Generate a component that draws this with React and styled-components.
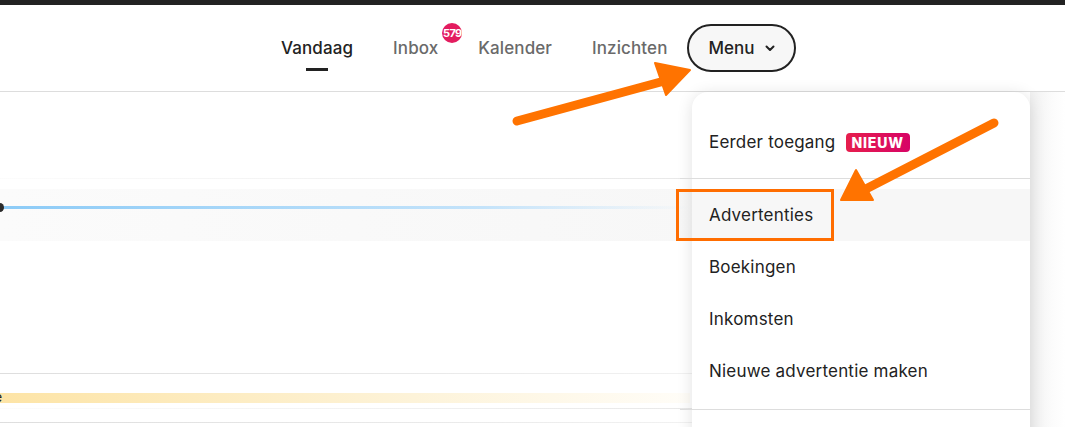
import styled, { createGlobalStyle } from "styled-components";

const GlobalStyle = createGlobalStyle`
  html, body {
    margin: 0;
    padding: 0;
    background: #fff;
    font-family: Inter, "Noto Sans", "Liberation Sans", sans-serif;
    color: #222;
    overflow: hidden;
  }
`;

const Page = styled.div`
  position: relative;
  width: 1065px;
  height: 427px;
  overflow: hidden;
  background: #fff;
`;

const TopStrip = styled.div`
  height: 5px;
  background: #222;
`;

const Header = styled.header`
  height: 87px;
  display: flex;
  align-items: center;
  padding-left: 281px;
  border-bottom: 1px solid #dddddd;
  box-sizing: border-box;
`;

const Nav = styled.nav`
  display: flex;
  align-items: center;
  gap: 40px;
`;

const NavLink = styled.a`
  position: relative;
  font-size: 17px;
  font-weight: 500;
  letter-spacing: 0.1px;
  color: ${(p) => (p.active ? "#222" : "#6a6a6a")};
  text-decoration: none;
  line-height: 20px;
  &::after {
    content: "";
    display: ${(p) => (p.active ? "block" : "none")};
    position: absolute;
    left: 50%;
    bottom: -13px;
    width: 22px;
    height: 3px;
    margin-left: -11px;
    background: #222;
  }
`;

const Badge = styled.span`
  position: absolute;
  top: -15px;
  right: -24px;
  width: 20px;
  height: 20px;
  border-radius: 50%;
  background: #e31c5f;
  color: #fff;
  font-size: 11px;
  font-weight: 700;
  display: flex;
  align-items: center;
  justify-content: center;
  letter-spacing: -0.6px;
`;

const MenuButton = styled.button`
  display: flex;
  align-items: center;
  gap: 10px;
  height: 48px;
  padding: 0 18px 0 19px;
  margin-left: -20px;
  border: 2px solid #222;
  border-radius: 24px;
  background: #f7f7f7;
  font-family: inherit;
  font-size: 17px;
  font-weight: 500;
  color: #222;
`;

const Content = styled.div`
  display: flex;
  flex-direction: column;
`;

const FadeLine = styled.div`
  height: 1px;
  margin-top: ${(p) => p.top || 0}px;
  background: linear-gradient(
    ${(p) => (p.reverse ? "to left" : "to right")},
    #dedede,
    rgba(222, 222, 222, 0.1) 100%
  );
`;

const HighlightRow = styled.div`
  height: 52px;
  margin-top: 10px;
  display: flex;
  align-items: flex-start;
  background: linear-gradient(to right, #fbfbfb, #f5f5f5);
`;

const BlueTrack = styled.div`
  position: relative;
  width: 690px;
  height: 3px;
  margin-top: 17px;
  background: linear-gradient(to right, #8ccbf7, #c4e3fa 70%, rgba(230, 242, 252, 0));
  &::before {
    content: "";
    position: absolute;
    left: -4px;
    top: -3px;
    width: 8px;
    height: 9px;
    border-radius: 50%;
    background: #2b2b2b;
  }
`;

const YellowBar = styled.div`
  position: relative;
  height: 10px;
  width: 690px;
  margin-top: 19px;
  background: linear-gradient(to right, #fde4a6, #fdf3d9 60%, #fffdf8);
  &::before {
    content: "e";
    position: absolute;
    left: -6px;
    top: -5px;
    font-size: 14px;
    color: #222;
  }
`;

const Dropdown = styled.div`
  position: absolute;
  left: 692px;
  top: 92px;
  width: 338px;
  height: 360px;
  background: #fff;
  border-radius: 16px 16px 0 0;
  box-shadow: 0 2px 16px rgba(0, 0, 0, 0.12);
  padding-top: 24px;
  box-sizing: border-box;
`;

const Item = styled.div`
  position: relative;
  height: 52px;
  display: flex;
  align-items: center;
  gap: 10px;
  padding-left: 17px;
  font-size: 17px;
  letter-spacing: 0.2px;
  color: #222;
  background: ${(p) => (p.hover ? "#f7f7f7" : "transparent")};
`;

const NewTag = styled.span`
  padding: 2px 6px;
  border-radius: 4px;
  background: linear-gradient(to right, #e61e4d, #d70466);
  color: #fff;
  font-size: 14px;
  font-weight: 800;
  letter-spacing: 0.8px;
  line-height: 15px;
`;

const Divider = styled.div`
  height: 1px;
  background: #dddddd;
  margin: ${(p) => p.margin};
`;

const Highlight = styled.div`
  position: absolute;
  left: -16px;
  top: 0;
  width: 158px;
  height: 52px;
  border: 3px solid #ff6d00;
  box-sizing: border-box;
`;

const RightShade = styled.div`
  position: absolute;
  left: 1030px;
  top: 92px;
  width: 35px;
  height: 335px;
  background: linear-gradient(to right, #f0f0f0, #fbfbfb 60%, #fff);
`;

const Arrows = styled.svg`
  position: absolute;
  left: 0;
  top: 0;
  pointer-events: none;
`;

const Chevron = () => (
  <svg width="12" height="12" viewBox="0 0 12 12" fill="none">
    <path d="M2.5 4.5 6 8l3.5-3.5" stroke="#222" strokeWidth="2" strokeLinecap="round" strokeLinejoin="round" />
  </svg>
);

const App = () => (
  <Page>
    <GlobalStyle />
    <TopStrip />
    <Header>
      <Nav>
        <NavLink active>Vandaag</NavLink>
        <NavLink>
          Inbox<Badge>579</Badge>
        </NavLink>
        <NavLink>Kalender</NavLink>
        <NavLink>Inzichten</NavLink>
        <MenuButton>
          Menu <Chevron />
        </MenuButton>
      </Nav>
    </Header>
    <Content>
      <FadeLine top={86} reverse />
      <HighlightRow>
        <BlueTrack />
      </HighlightRow>
      <FadeLine top={132} />
      <YellowBar />
      <FadeLine top={5} reverse />
      <FadeLine top={13} />
    </Content>
    <RightShade />
    <Dropdown>
      <Item>
        Eerder toegang <NewTag>NIEUW</NewTag>
      </Item>
      <Divider margin="10px 0 10px -12px" />
      <Item hover>
        Advertenties
        <Highlight />
      </Item>
      <Item>Boekingen</Item>
      <Item>Inkomsten</Item>
      <Item>Nieuwe advertentie maken</Item>
      <Divider margin="12px 0 0 -12px" />
    </Dropdown>
    <Arrows width="1065" height="427" viewBox="0 0 1065 427">
      <g fill="#ff7300" stroke="#ff7300" strokeLinecap="round" strokeLinejoin="round">
        <line x1="517" y1="121" x2="668" y2="80" strokeWidth="9" />
        <polygon points="655,63 690,70 666,95" strokeWidth="2" />
        <line x1="994" y1="123" x2="860" y2="192" strokeWidth="9" />
        <polygon points="856,170 841,200 873,200" strokeWidth="2" />
      </g>
    </Arrows>
  </Page>
);

export default App;
